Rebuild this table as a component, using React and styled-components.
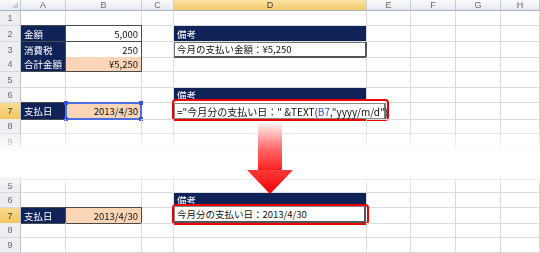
import React from 'react';
import styled, { createGlobalStyle, css } from 'styled-components';

const COLS = '21px 45px 76px 32px 193px 44px 45px 45px 1fr';
const GRID = '#dadcdd';
const BOX = '#4a4a4a';

const fills = {
  navy: '#0f2359',
  peach: '#fbd5b5',
  white: '#ffffff',
};

const GlobalStyle = createGlobalStyle`
  html, body { margin: 0; padding: 0; background: #fff; }
  body { font-family: "Noto Sans CJK JP", "Noto Sans", sans-serif; }
`;

const Page = styled.div`
  position: relative;
  width: 540px;
  height: 253px;
  overflow: hidden;
  background: #fff;
  display: flex;
  flex-direction: column;
`;

const Sheet = styled.div`
  display: flex;
  flex-direction: column;
  margin-top: ${({ $gap }) => $gap || 0}px;
  ${({ $fade }) => $fade && css`
    -webkit-mask-image: linear-gradient(to ${$fade}, #000 85%, rgba(0,0,0,0.15));
    mask-image: linear-gradient(to ${$fade}, #000 85%, rgba(0,0,0,0.15));
  `}
`;

const Row = styled.div`
  display: grid;
  grid-template-columns: ${COLS};
  height: ${({ $h }) => $h}px;
`;

const ColHead = styled.div`
  box-sizing: border-box;
  display: flex;
  align-items: center;
  justify-content: center;
  font-family: "Liberation Sans", sans-serif;
  font-size: 9px;
  color: ${({ $on }) => ($on ? '#3b3b3b' : '#6a6a6a')};
  border-right: 1px solid #c5ccd6;
  border-bottom: 1px solid #a9b4c2;
  background: ${({ $on }) =>
    $on
      ? 'linear-gradient(#fbe3a6, #f3c867)'
      : 'linear-gradient(#fafbfc, #e6eaef)'};
`;

const Corner = styled(ColHead)`
  position: relative;
  &::after {
    content: '';
    position: absolute;
    right: 2px;
    bottom: 2px;
    border-left: 6px solid transparent;
    border-bottom: 6px solid #c6ccd4;
  }
`;

const RowHead = styled.div`
  box-sizing: border-box;
  display: flex;
  align-items: center;
  justify-content: center;
  font-family: "Liberation Sans", sans-serif;
  font-size: 9px;
  color: ${({ $on }) => ($on ? '#3b3b3b' : '#6a6a6a')};
  border-right: 1px solid #b8c1cc;
  border-bottom: 1px solid #d4d9df;
  background: ${({ $on }) =>
    $on ? 'linear-gradient(#fadc8e, #f2c560)' : '#eceef1'};
`;

const Cell = styled.div`
  position: relative;
  box-sizing: border-box;
  display: flex;
  align-items: center;
  justify-content: ${({ $align }) => ($align === 'right' ? 'flex-end' : 'flex-start')};
  padding: 0 ${({ $pad }) => ($pad ?? 3)}px;
  font-size: 9.5px;
  white-space: nowrap;
  color: ${({ $fill }) => ($fill === 'navy' ? '#fff' : '#111')};
  background: ${({ $fill }) => fills[$fill] || 'transparent'};
  border-right: 1px solid ${({ $box }) => ($box ? BOX : GRID)};
  border-bottom: 1px solid ${({ $box }) => ($box ? BOX : GRID)};
  ${({ $top }) => $top && css`box-shadow: 0 -1px 0 ${BOX};`}
  ${({ $frame }) => $frame && css`
    border-right: 2px solid #555;
    border-bottom: 2px solid #555;
    box-shadow: inset 1px 1px 0 #777;
  `}
`;

const Selection = styled.div`
  position: absolute;
  inset: -1px -1px -1px -1px;
  border: 2px solid #4d6ee0;
  pointer-events: none;
`;

const Handle = styled.span`
  position: absolute;
  width: 4px;
  height: 4px;
  background: #2f55e4;
  ${({ $v }) => ($v === 'top' ? 'top: -3px;' : 'bottom: -3px;')}
  ${({ $h }) => ($h === 'left' ? 'left: -3px;' : 'right: -3px;')}
`;

const RedBox = styled.div`
  position: absolute;
  left: -2px;
  top: -4px;
  width: ${({ $w }) => $w}px;
  height: ${({ $hh }) => $hh}px;
  box-sizing: border-box;
  border: 2px solid #ee0000;
  border-radius: 4px;
  background: #fff;
`;

const ResultBox = styled.div`
  position: relative;
  z-index: 1;
  box-sizing: border-box;
  display: flex;
  align-items: center;
  width: 100%;
  height: 17px;
  margin-top: -2px;
  padding: 0 2px;
  border: 1px solid #8a8a8a;
  border-right: 2px solid #555;
  border-bottom: 2px solid #555;
  background: #fff;
`;

const EditBox = styled.div`
  position: relative;
  z-index: 1;
  box-sizing: border-box;
  flex: none;
  margin-left: -3px;
  width: 212px;
  height: 16px;
  padding: 0 2px;
  display: flex;
  align-items: center;
  border: 1px solid #8a8a8a;
  border-right: 2px solid #777;
  background: #fff;
  font-size: 10px;
  color: #111;
`;

const Ref = styled.span`
  color: #3a4fe0;
`;

const Arrow = styled.svg`
  position: absolute;
  left: 246px;
  top: 121px;
  z-index: 3;
`;

const topRows = [15, 16, 15, 15, 16, 15, 16, 15, 16];
const bottomRows = [5, 13, 15, 15, 15, 15];

const cellsTop = {
  2: [
    { fill: 'navy', text: '金額', box: true, top: true },
    { fill: 'white', text: '5,000', align: 'right', box: true, top: true },
    {},
    { fill: 'navy', text: '備考' },
  ],
  3: [
    { fill: 'navy', text: '消費税', box: true },
    { fill: 'white', text: '250', align: 'right', box: true },
    {},
    { fill: 'white', text: '今月の支払い金額：¥5,250', frame: true },
  ],
  4: [
    { fill: 'navy', text: '合計金額', box: true },
    { fill: 'peach', text: '¥5,250', align: 'right', box: true },
    {},
    {},
  ],
  6: [{}, {}, {}, { fill: 'navy', text: '備考' }],
  7: [
    { fill: 'navy', text: '支払日', box: true, top: true },
    { fill: 'peach', text: '2013/4/30', align: 'right', selected: true },
    {},
    { edit: true },
  ],
};

const cellsBottom = {
  6: [{}, {}, {}, { fill: 'navy', text: '備考' }],
  7: [
    { fill: 'navy', text: '支払日', box: true, top: true },
    { fill: 'peach', text: '2013/4/30', align: 'right', box: true, top: true },
    {},
    { result: true },
  ],
};

const renderCell = (c, key) => {
  if (c.edit) {
    return (
      <Cell key={key}>
        <RedBox $w={217} $hh={22} />
        <EditBox>
          ="今月分の支払い日：" &amp;TEXT(<Ref>B7</Ref>,"yyyy/m/d")
        </EditBox>
      </Cell>
    );
  }
  if (c.result) {
    return (
      <Cell key={key} $pad={0}>
        <RedBox $w={197} $hh={21} />
        <ResultBox>今月分の支払い日：2013/4/30</ResultBox>
      </Cell>
    );
  }
  return (
    <Cell key={key} $fill={c.fill} $align={c.align} $box={c.box} $top={c.top} $frame={c.frame}>
      {c.text}
      {c.selected && (
        <Selection>
          <Handle $v="top" $h="left" />
          <Handle $v="top" $h="right" />
          <Handle $v="bottom" $h="left" />
          <Handle $v="bottom" $h="right" />
        </Selection>
      )}
    </Cell>
  );
};

const SheetRows = ({ start, heights, cells }) =>
  heights.map((h, i) => {
    const n = start + i;
    const data = cells[n] || [];
    return (
      <Row key={n} $h={h}>
        <RowHead $on={n === 7}>{h > 8 ? n : ''}</RowHead>
        {Array.from({ length: 8 }, (_, j) => renderCell(data[j] || {}, j))}
      </Row>
    );
  });

const App = () => (
  <Page>
    <GlobalStyle />
    <Sheet $fade="bottom">
      <Row $h={11}>
        <Corner />
        {['A', 'B', 'C', 'D', 'E', 'F', 'G', 'H'].map((l) => (
          <ColHead key={l} $on={l === 'D'}>{l}</ColHead>
        ))}
      </Row>
      <SheetRows start={1} heights={topRows} cells={cellsTop} />
    </Sheet>
    <Sheet $gap={25} $fade="top">
      <SheetRows start={4} heights={bottomRows} cells={cellsBottom} />
    </Sheet>
    <Arrow width="48" height="74" viewBox="0 0 48 74">
      <defs>
        <linearGradient id="shaft" x1="0" y1="0" x2="0" y2="1">
          <stop offset="0" stopColor="#ffffff" />
          <stop offset="0.55" stopColor="#ff6a6a" />
          <stop offset="1" stopColor="#ff1e1e" />
        </linearGradient>
        <linearGradient id="head" x1="0" y1="0" x2="0" y2="1">
          <stop offset="0" stopColor="#ff3a3a" />
          <stop offset="1" stopColor="#f20000" />
        </linearGradient>
      </defs>
      <rect x="12" y="0" width="24" height="50" fill="url(#shaft)" />
      <polygon points="1,49 47,49 24,73" fill="url(#head)" />
    </Arrow>
  </Page>
);

export default App;
